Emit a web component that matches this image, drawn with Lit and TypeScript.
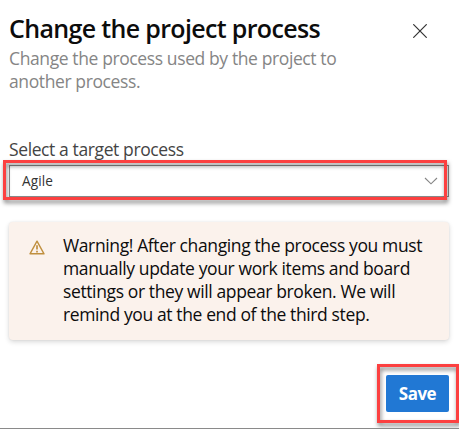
import { LitElement, html, css } from "lit";
import { customElement, property } from "lit/decorators.js";

@customElement("process-select")
class ProcessSelect extends LitElement {
  @property() value = "";

  static styles = css`
    :host { display: block; position: relative; }
    .field {
      box-sizing: border-box; height: 32px; border: 1px solid #8c8c8c; background: #fff;
      display: flex; align-items: center; justify-content: space-between;
      padding: 0 11px 0 12px; font-size: 13.6px; letter-spacing: 0.1px; line-height: 18px; color: #333;
    }
    .field span { margin-top: -1px; }
    .frame {
      position: absolute; left: -6px; top: -5px; right: 2px; bottom: -3px;
      box-sizing: border-box; border: 3px solid #fc4040;
      filter: drop-shadow(1px 3px 2px rgba(0, 0, 0, 0.5));
    }
    svg { display: block; margin-right: -1px; }
  `;

  render() {
    return html`
      <div class="field">
        <span>${this.value}</span>
        <svg width="14" height="8" viewBox="0 0 14 8" fill="none" stroke="#858585" stroke-width="1.1">
          <path d="M1 1 L7 6.8 L13 1" />
        </svg>
      </div>
      <div class="frame"></div>
    `;
  }
}

@customElement("warning-card")
class WarningCard extends LitElement {
  static styles = css`
    :host {
      box-sizing: border-box; display: flex; height: 118px; padding: 12px 0 0 20px; gap: 18px;
      background: #fbf2ec; border-radius: 4px;
      box-shadow: 0 2px 5px rgba(0, 0, 0, 0.15), 0 0 2px rgba(0, 0, 0, 0.08);
    }
    svg { display: block; flex: none; margin-top: 6px; }
    .text { font-size: 17.5px; line-height: 23px; color: #0c0c0c; white-space: nowrap; letter-spacing: -0.38px; }
  `;

  render() {
    return html`
      <svg width="16" height="15" viewBox="0 0 16 15" fill="none" stroke="#c0903f" stroke-width="1.4" stroke-linejoin="round">
        <path d="M8 1.2 L15 13.8 H1 Z" />
        <path d="M8 5.2 V9.6 M8 10.8 V12.4" stroke-width="1.7" />
      </svg>
      <div class="text">
        Warning! After changing the process you must<br />
        manually update your work items and board<br />
        settings or they will appear broken. We will<br />
        remind you at the end of the third step.
      </div>
    `;
  }
}

@customElement("app-root")
class AppRoot extends LitElement {
  static styles = css`
    :host {
      box-sizing: border-box; display: flex; flex-direction: column; width: 459px; height: 429px;
      padding: 11px 10px 0 9px; overflow: hidden; background: #fff; border-bottom: 1px solid #8a8a8a;
      font-family: "Open Sans", "Noto Sans", sans-serif;
    }
    header { display: flex; justify-content: space-between; height: 127px; }
    h1 { margin: 0 0 2px; font-size: 25px; font-weight: 600; line-height: 34px; color: #0c0c0c; white-space: nowrap; letter-spacing: -0.66px; }
    p { margin: 0; font-size: 17.5px; line-height: 23px; color: #858585; white-space: nowrap; letter-spacing: -0.39px; }
    .close { margin: 13px 22px 0 0; flex: none; }
    label { font-size: 17.5px; line-height: 23px; height: 27px; color: #444; letter-spacing: -0.39px; }
    warning-card { margin-top: 25px; }
    footer { display: flex; justify-content: flex-end; margin-top: 35px; }
    .action { position: relative; }
    button {
      display: block; width: 63px; height: 37px; padding: 0; border: 0; border-radius: 2px;
      background: #2178d4; color: #fff; font: 700 17px "Open Sans", "Noto Sans", sans-serif; letter-spacing: -0.5px;
    }
    .frame {
      position: absolute; left: -9px; top: -11px; width: 82px; height: 59px;
      box-sizing: border-box; border: 3px solid #fc4040;
      filter: drop-shadow(1px 3px 2px rgba(0, 0, 0, 0.5)); pointer-events: none;
    }
  `;

  render() {
    return html`
      <header>
        <div>
          <h1>Change the project process</h1>
          <p>Change the process used by the project to<br />another process.</p>
        </div>
        <svg class="close" width="14" height="14" viewBox="0 0 14 14" stroke="#333" stroke-width="1.2">
          <path d="M0.3 0.3 L13.7 13.7 M13.7 0.3 L0.3 13.7" />
        </svg>
      </header>
      <label>Select a target process</label>
      <process-select value="Agile"></process-select>
      <warning-card></warning-card>
      <footer>
        <div class="action">
          <button>Save</button>
          <div class="frame"></div>
        </div>
      </footer>
    `;
  }
}
